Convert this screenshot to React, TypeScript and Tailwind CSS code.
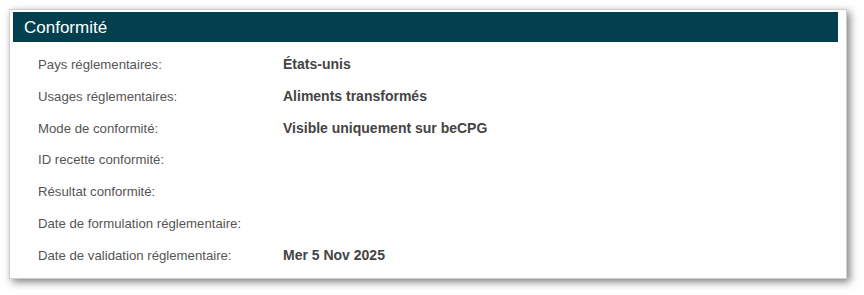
import React from "react";

const rows: [string, string][] = [
  ["Pays réglementaires:", "États-unis"],
  ["Usages réglementaires:", "Aliments transformés"],
  ["Mode de conformité:", "Visible uniquement sur beCPG"],
  ["ID recette conformité:", ""],
  ["Résultat conformité:", ""],
  ["Date de formulation réglementaire:", ""],
  ["Date de validation réglementaire:", "Mer 5 Nov 2025"],
];

export default function App() {
  return (
    <div className="w-[864px] h-[295px] bg-white pt-[9px] pl-[9px] font-['Liberation_Sans',Arial,sans-serif]">
      <div className="w-[838px] h-[270px] border border-[#cfcfcf] bg-white shadow-[3px_3px_8px_rgba(0,0,0,0.5)] flex flex-col">
        <div className="mt-[2px] ml-[3px] mr-[8px] h-[30px] bg-[#023f4f] flex items-center pl-[11px]">
          <span className="text-white text-[17px] leading-none">Conformité</span>
        </div>
        <div className="pt-[7px] flex flex-col">
          {rows.map(([label, value]) => (
            <div key={label} className="h-[31.8px] flex items-center">
              <div className="w-[273px] shrink-0 pl-[28px] text-[13.2px] text-[#555555]">{label}</div>
              <div className="text-[14px] font-bold text-[#444444]">{value}</div>
            </div>
          ))}
        </div>
      </div>
    </div>
  );
}
